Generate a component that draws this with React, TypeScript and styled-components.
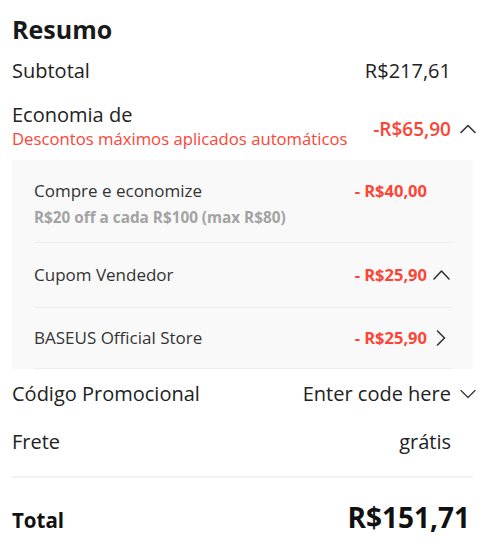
import React from "react";
import styled, { createGlobalStyle } from "styled-components";

const Global = createGlobalStyle`
  html, body { margin: 0; padding: 0; background: #fff; }
  body { font-family: "Open Sans", "Liberation Sans", sans-serif; color: #222; }
  * { box-sizing: border-box; }
`;

const RED = "#fd4437";

const Card = styled.div`
  width: 465px;
  margin-left: 12px;
  padding-top: 13px;
  display: flex;
  flex-direction: column;
`;

const Title = styled.h2`
  margin: 0;
  font-size: 25px;
  line-height: 32px;
  font-weight: 700;
  color: #191919;
`;

const Row = styled.div<{ $top: number }>`
  display: flex;
  justify-content: space-between;
  align-items: center;
  margin-top: ${(p) => p.$top}px;
`;

const Label = styled.div`
  font-size: 20px;
  line-height: 26px;
  color: #222;
`;

const LabelBlock = styled.div`
  display: flex;
  flex-direction: column;
`;

const RedNote = styled.div`
  font-size: 16.7px;
  line-height: 22px;
  color: ${RED};
`;

const Right = styled.div<{ $shift?: number }>`
  display: flex;
  align-items: center;
  padding-top: ${(p) => p.$shift ?? 0}px;
`;

const Value = styled.div<{ $red?: boolean; $big?: boolean }>`
  font-size: ${(p) => (p.$big ? 19 : 20)}px;
  line-height: 26px;
  color: ${(p) => (p.$red ? RED : "#222")};
  font-weight: ${(p) => (p.$big ? 600 : 400)};
`;

const Slot = styled.div<{ $w: number; $pr?: number }>`
  width: ${(p) => p.$w}px;
  padding-right: ${(p) => p.$pr ?? 0}px;
  display: flex;
  justify-content: flex-end;
  align-items: center;
  color: #333;
`;

const Panel = styled.div`
  margin-top: 10px;
  margin-right: 4px;
  background: #f9f9f9;
  padding-left: 22px;
`;

const Item = styled.div<{ $h: number; $pt?: number }>`
  height: ${(p) => p.$h}px;
  margin-right: 21px;
  border-bottom: 1px solid #eeeeee;
  display: flex;
  justify-content: space-between;
  align-items: ${(p) => (p.$pt ? "flex-start" : "center")};
  padding-top: ${(p) => p.$pt ?? 0}px;
`;

const ItemLabel = styled.div`
  font-size: 17px;
  line-height: 24px;
  color: #333;
`;

const ItemSub = styled.div`
  margin-top: 4px;
  font-size: 15.3px;
  line-height: 20px;
  font-weight: 700;
  color: #a3a3a3;
`;

const ItemValue = styled.div`
  font-size: 16.5px;
  line-height: 24px;
  font-weight: 700;
  color: ${RED};
`;

const Divider = styled.div`
  margin-top: 21px;
  margin-right: 4px;
  height: 2px;
  background: #f2f2f2;
`;

const TotalRow = styled.div`
  display: flex;
  justify-content: space-between;
  align-items: baseline;
  margin-top: 21px;
  padding-right: 7px;
`;

const TotalLabel = styled.div`
  font-size: 20.5px;
  line-height: 26px;
  font-weight: 700;
  color: #111;
`;

const TotalValue = styled.div`
  font-size: 28px;
  line-height: 36px;
  font-weight: 700;
  color: #111;
`;

type Dir = "up" | "upSmall" | "down" | "right";

const Chevron = ({ dir }: { dir: Dir }) => {
  const pts: Record<Dir, string> = {
    up: "1,11.5 8,4.5 15,11.5",
    upSmall: "1,12 8.5,4 16,12",
    down: "1,4.5 8,11.5 15,4.5",
    right: "4.5,1 11.5,8 4.5,15",
  };
  return (
    <svg width={17} height={16} viewBox="0 0 17 16" fill="none">
      <polyline
        points={pts[dir]}
        stroke="currentColor"
        strokeWidth={dir === "down" ? 1.2 : 1.6}
        strokeLinecap="round"
        strokeLinejoin="round"
      />
    </svg>
  );
};

export default function App() {
  return (
    <>
      <Global />
      <Card>
        <Title>Resumo</Title>
        <Row $top={13}>
          <Label>Subtotal</Label>
          <Right>
            <Value>R$217,61</Value>
            <Slot $w={26} />
          </Right>
        </Row>
        <Row $top={18}>
          <LabelBlock>
            <Label>Economia de</Label>
            <RedNote>Descontos máximos aplicados automáticos</RedNote>
          </LabelBlock>
          <Right $shift={6}>
            <Value $red $big>-R$65,90</Value>
            <Slot $w={26}>
              <Chevron dir="up" />
            </Slot>
          </Right>
        </Row>
        <Panel>
          <Item $h={83} $pt={19}>
            <LabelBlock>
              <ItemLabel>Compre e economize</ItemLabel>
              <ItemSub>R$20 off a cada R$100 (max R$80)</ItemSub>
            </LabelBlock>
            <Right>
              <ItemValue>- R$40,00</ItemValue>
              <Slot $w={25} />
            </Right>
          </Item>
          <Item $h={65}>
            <ItemLabel>Cupom Vendedor</ItemLabel>
            <Right>
              <ItemValue>- R$25,90</ItemValue>
              <Slot $w={25} $pr={2}>
                <Chevron dir="upSmall" />
              </Slot>
            </Right>
          </Item>
          <Item $h={61}>
            <ItemLabel>BASEUS Official Store</ItemLabel>
            <Right>
              <ItemValue>- R$25,90</ItemValue>
              <Slot $w={25} $pr={2}>
                <Chevron dir="right" />
              </Slot>
            </Right>
          </Item>
        </Panel>
        <Row $top={12}>
          <Label>Código Promocional</Label>
          <Right>
            <Value>Enter code here</Value>
            <Slot $w={26}>
              <Chevron dir="down" />
            </Slot>
          </Right>
        </Row>
        <Row $top={22}>
          <Label>Frete</Label>
          <Right>
            <Value>grátis</Value>
            <Slot $w={26} />
          </Right>
        </Row>
        <Divider />
        <TotalRow>
          <TotalLabel>Total</TotalLabel>
          <TotalValue>R$151,71</TotalValue>
        </TotalRow>
      </Card>
    </>
  );
}
